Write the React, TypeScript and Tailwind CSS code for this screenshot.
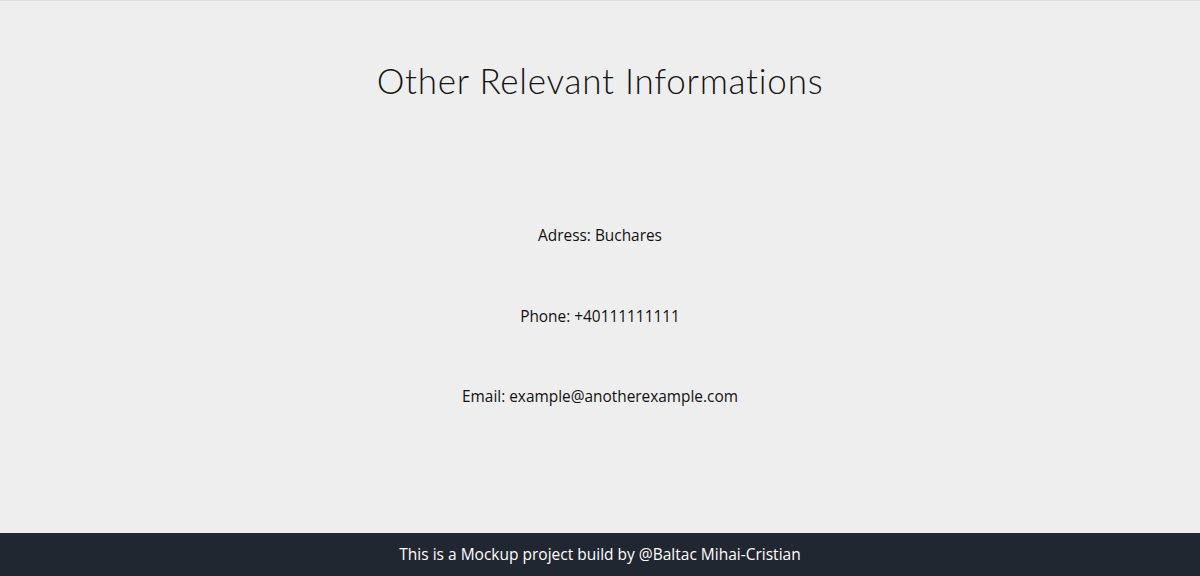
const info = [
  "Adress: Buchares",
  "Phone: +40111111111",
  "Email: example@anotherexample.com",
];

const App = () => {
  return (
    <div className="flex min-h-[576px] flex-col bg-[#eeeeee] font-['Open_Sans',sans-serif] text-[#111]">
      <section className="flex-1 border-t border-[#dddddd]">
        <h1 className="pt-[55px] text-center font-['Lato',sans-serif] text-[35px] leading-[48px] font-light tracking-[0.75px] text-[#151515]">
          Other Relevant Informations
        </h1>

        <div className="mt-[120px] flex flex-col items-center gap-[56.5px]">
          {info.map((line) => (
            <p key={line} className="text-[15.4px] leading-[24px]">
              {line}
            </p>
          ))}
        </div>
      </section>

      <footer className="flex h-[43px] items-center justify-center bg-[#212730] pt-[1px] text-[15.5px] text-white">
        This is a Mockup project build by @Baltac Mihai-Cristian
      </footer>
    </div>
  );
};

export default App;
